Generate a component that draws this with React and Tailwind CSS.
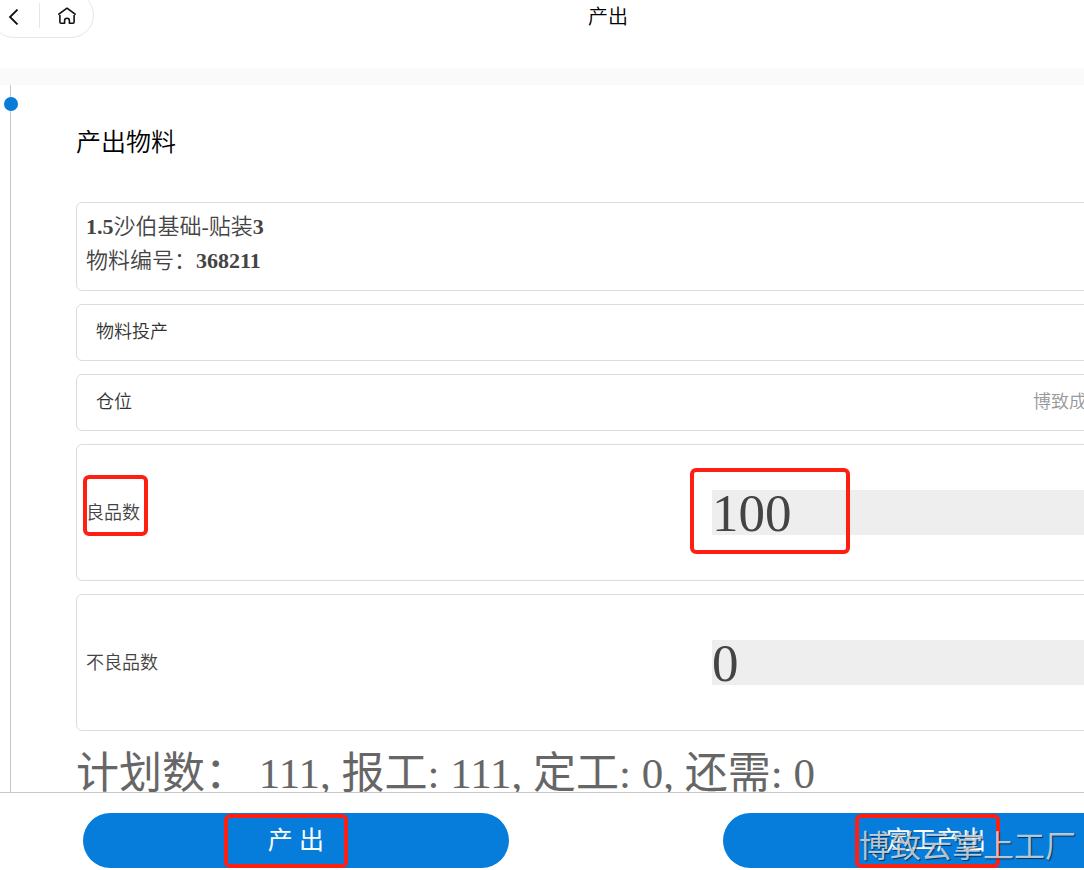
import { useState } from 'react'

function Mark({ className }) {
  return (
    <span
      aria-hidden="true"
      className={`absolute border-4 border-[#ff1f12] rounded-md pointer-events-none ${className}`}
    />
  )
}

function Row({ label, value }) {
  return (
    <div className="h-[57px] border border-[#dcdcdc] rounded-md flex items-center justify-between pl-[19px] pr-[10px] text-[18px] text-[#333]">
      <span>{label}</span>
      {value && <span className="text-[#999]">{value}</span>}
    </div>
  )
}

function CountField({ id, label, value, onChange, highlighted }) {
  return (
    <div className="h-[137px] border border-[#dcdcdc] rounded-md flex items-center justify-between px-[9px]">
      <label htmlFor={id} className="relative pt-px text-[18px] text-[#444]">
        {label}
        {highlighted && <Mark className="-left-[3px] -right-2 -top-6 h-[61px]" />}
      </label>
      <div className="relative">
        <input
          id={id}
          type="text"
          inputMode="numeric"
          value={value}
          onChange={(e) => onChange(e.target.value)}
          className="block w-[484px] h-[45px] bg-[#eee] text-[53px] leading-[45px] text-[#444] outline-none"
        />
        {highlighted && <Mark className="-left-[22px] -top-[22px] w-[160px] h-[86px]" />}
      </div>
    </div>
  )
}

export default function App() {
  const [good, setGood] = useState('100')
  const [bad, setBad] = useState('0')

  return (
    <div className="relative h-screen overflow-hidden bg-white font-['Liberation_Serif','Noto_Sans_CJK_SC',serif] font-[350]">
      <div className="-mr-[132px] h-full flex flex-col">
        <header className="relative h-[68px] shrink-0 text-center">
          <nav className="absolute -left-[9px] -top-2 w-[103px] h-[46px] border border-[#e6e6e6] rounded-r-full rounded-bl-full flex items-center">
            <button type="button" aria-label="返回" className="w-[47px] h-6 pl-[14px]">
              <svg viewBox="0 0 16 16" className="w-4 h-4 mt-1" fill="none" stroke="#111" strokeWidth="1.8">
                <path d="M11.5 0.5 L4 8 L11.5 15.5" />
              </svg>
            </button>
            <span className="w-px h-[25px] bg-[#e6e6e6]" />
            <button type="button" aria-label="首页" className="w-[53px] h-6 flex items-center justify-center">
              <svg viewBox="0 0 18 17" className="w-[18px] h-[17px]" fill="none" stroke="#111" strokeWidth="1.6" strokeLinejoin="round">
                <path d="M0.3 7.6 L9 1.2 L17.7 7.6" />
                <path d="M1.9 8 V15 Q1.9 16.2 3 16.2 H6.6 V13.6 Q6.6 11.2 9 11.2 Q11.4 11.2 11.4 13.6 V16.2 H15 Q16.1 16.2 16.1 15 V8" />
              </svg>
            </button>
          </nav>
          <h1 className="pt-px text-[20px] leading-8 text-black">产出</h1>
        </header>

        <main className="flex-1 min-h-0 overflow-hidden border-t-[17px] border-[#fafafa] pl-[10px]">
          <section className="relative border-l border-[#c8c8c8] pl-[65px] pr-[10px]">
            <span className="absolute -left-[7px] top-3 size-[14px] rounded-full bg-[#067ddb]" />
            <h2 className="pt-[37px] h-[117px] text-[25px] leading-[42px] text-black">产出物料</h2>

            <div className="flex flex-col gap-[13px]">
              <div className="h-[89px] border border-[#dcdcdc] rounded-md px-[9px] pt-[7px] text-[22px] leading-[34px] text-[#444]">
                <p>
                  <span className="font-bold">1.5</span>沙伯基础-贴装<span className="font-bold">3</span>
                </p>
                <p>
                  物料编号：<span className="font-bold">368211</span>
                </p>
              </div>
              <Row label="物料投产" />
              <Row label="仓位" value="博致成品仓库电子仓" />
              <CountField id="good" label="良品数" value={good} onChange={setGood} highlighted />
              <CountField id="bad" label="不良品数" value={bad} onChange={setBad} />
            </div>

            <p className="pt-[13px] text-[43px] leading-[60px] font-normal text-[#666] whitespace-nowrap">
              计划数： 111, 报工: 111, 定工: 0, 还需: 0
            </p>
          </section>
        </main>

        <footer className="h-[78px] shrink-0 border-t border-[#c8c8c8] pt-5 pl-[83px] flex gap-[214px]">
          <button type="button" className="relative w-[426px] h-[55px] rounded-full bg-[#067ddb] text-white text-[25px] font-normal">
            产 出
            <Mark className="left-[141px] top-[1px] w-[124px] h-[54px]" />
          </button>
          <button type="button" className="relative w-[426px] h-[55px] rounded-full bg-[#067ddb] text-white text-[25px] font-normal">
            定工产出
            <Mark className="left-[132px] top-[1px] w-[145px] h-[54px]" />
          </button>
        </footer>
      </div>

      <span className="absolute right-2 bottom-0 text-[31px] leading-[46px] font-normal text-[#d4dde6]/85 [text-shadow:1px_1px_1px_rgba(0,0,0,0.6)] pointer-events-none">
        博致云掌上工厂
      </span>
    </div>
  )
}
